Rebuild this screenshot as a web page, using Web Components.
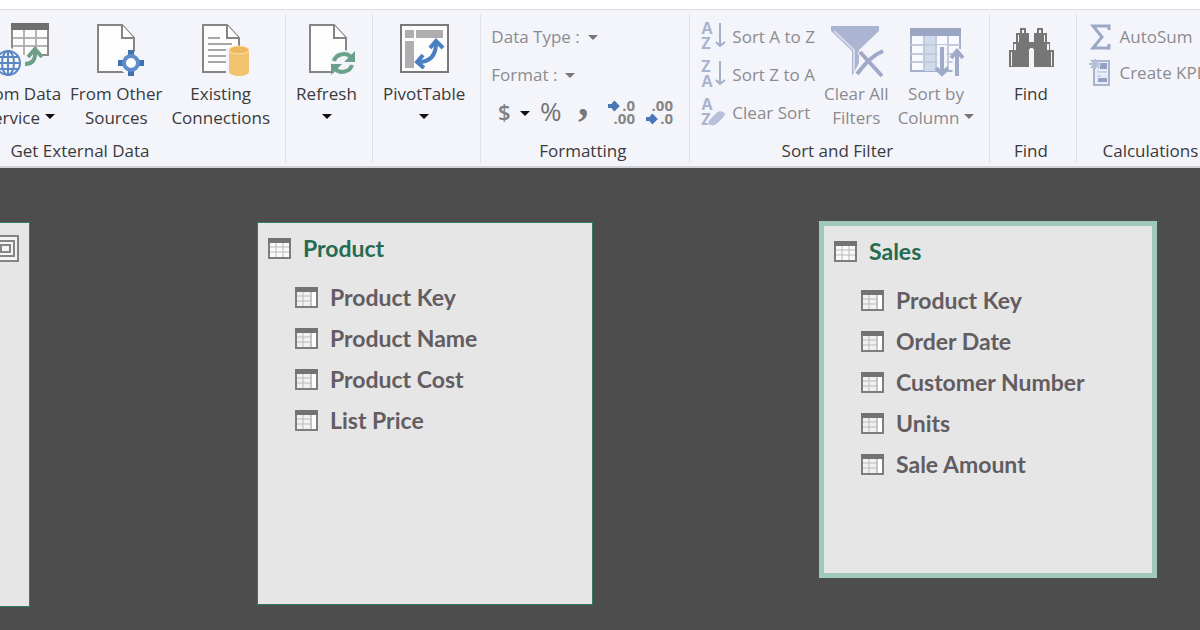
<!DOCTYPE html>
<html lang="en">
<head>
<meta charset="utf-8">
<meta name="viewport" content="width=device-width, initial-scale=1">
<title>Diagram View</title>
<style>
  html, body { height: 100%; }
  body {
    margin: 0;
    overflow: hidden;
    background: #4d4d4d;
    font-family: "Open Sans", "Noto Sans", sans-serif;
  }
</style>
</head>
<body>

<app-window>
  <ribbon-bar slot="ribbon">
    <ribbon-group label="Get External Data" class="first">
      <ribbon-button icon="dataservice" line1="From Data" line2="Service" menu></ribbon-button>
      <ribbon-button icon="othersources" line1="From Other" line2="Sources"></ribbon-button>
      <ribbon-button icon="connections" line1="Existing" line2="Connections"></ribbon-button>
    </ribbon-group>
    <ribbon-group>
      <ribbon-button icon="refresh" line1="Refresh" menu></ribbon-button>
    </ribbon-group>
    <ribbon-group>
      <ribbon-button icon="pivot" line1="PivotTable" menu></ribbon-button>
    </ribbon-group>
    <ribbon-group label="Formatting">
      <ribbon-stack>
        <ribbon-item text="Data Type :" menu disabled></ribbon-item>
        <ribbon-item text="Format :" menu disabled></ribbon-item>
        <format-buttons></format-buttons>
      </ribbon-stack>
    </ribbon-group>
    <ribbon-group label="Sort and Filter">
      <ribbon-stack>
        <ribbon-item icon="sortaz" text="Sort A to Z" disabled></ribbon-item>
        <ribbon-item icon="sortza" text="Sort Z to A" disabled></ribbon-item>
        <ribbon-item icon="clearsort" text="Clear Sort" disabled></ribbon-item>
      </ribbon-stack>
      <ribbon-button icon="clearfilters" line1="Clear All" line2="Filters" disabled></ribbon-button>
      <ribbon-button icon="sortcolumn" line1="Sort by" line2="Column" menu disabled></ribbon-button>
    </ribbon-group>
    <ribbon-group label="Find">
      <ribbon-button icon="find" line1="Find"></ribbon-button>
    </ribbon-group>
    <ribbon-group label="Calculations" class="last">
      <ribbon-stack class="tight">
        <ribbon-item icon="sum" text="AutoSum" disabled></ribbon-item>
        <ribbon-item icon="kpi" text="Create KPI" disabled></ribbon-item>
      </ribbon-stack>
    </ribbon-group>
  </ribbon-bar>

  <table-card style="left:-306px; top:54px; width:336px; height:385px" maximize></table-card>
  <table-card name="Product" style="left:257px; top:54px; width:336px; height:383px">
    <field-row>Product Key</field-row>
    <field-row>Product Name</field-row>
    <field-row>Product Cost</field-row>
    <field-row>List Price</field-row>
  </table-card>
  <table-card name="Sales" selected style="left:819px; top:53px; width:338px; height:357px">
    <field-row>Product Key</field-row>
    <field-row>Order Date</field-row>
    <field-row>Customer Number</field-row>
    <field-row>Units</field-row>
    <field-row>Sale Amount</field-row>
  </table-card>
</app-window>

<script>
const svg = (w, h, x, y, body) =>
  `<svg width="${w}" height="${h}" viewBox="${x} ${y} ${w} ${h}" aria-hidden="true">${body}</svg>`;

const page = (x) => `
  <path d="M${x} 25h24l12 13v34h-36z" fill="#fdfdfd" stroke="#858585" stroke-width="2"/>
  <path d="M${x + 24} 25v13h12" fill="#fdfdfd" stroke="#858585" stroke-width="2"/>`;

const azText = 'font-family="Open Sans" font-weight="700" font-size="16" text-anchor="middle" fill="#a9b3cd"';
const decText = 'font-family="Open Sans" font-weight="700" font-size="15" fill="#858585"';

const icons = {
  dataservice: svg(56, 54, -8, 23, `
    <rect x="13" y="24" width="36" height="31" fill="#fdfdfd"/>
    <path d="M13 38h36M13 46h36M25 30v25M37 30v25" stroke="#b4b4b4" stroke-width="2"/>
    <path d="M13 55V24h36v31h-8" fill="none" stroke="#8c8c8c" stroke-width="2"/>
    <path d="M12 23h38v7H12z" fill="#6f6f6f"/>
    <circle cx="9" cy="63" r="15" fill="#f4f5fa"/>
    <g fill="none" stroke="#5b87c5" stroke-width="2">
      <circle cx="9" cy="63" r="12"/><ellipse cx="9" cy="63" rx="6" ry="12"/>
      <path d="M9 51v24M-3 63h24M-1 57h20M-1 69h20"/>
    </g>
    <path d="M26 65c8 0 11-4 10-14" fill="none" stroke="#f4f5fa" stroke-width="8"/>
    <path d="M26 64c7 0 11-4 10-13" fill="none" stroke="#6f9f8b" stroke-width="4"/>
    <path d="M29 57l7-8 7 8" fill="none" stroke="#6f9f8b" stroke-width="4"/>`),
  othersources: svg(56, 54, 91, 23, page(101) + `
    <circle cx="134" cy="63" r="12" fill="#f4f5fa"/>
    <path d="M134 50v26M121 63h26" stroke="#3f70b0" stroke-width="6"/>
    <circle cx="134" cy="63" r="7" fill="#fdfdfd" stroke="#5e8dca" stroke-width="4"/>`),
  connections: svg(56, 54, 193, 23, page(203) + `
    <path d="M208 38h12M208 44h24M208 50h20M208 56h18M208 62h18" stroke="#a8a8a8" stroke-width="2"/>
    <path d="M226 48h25v29h-25z" fill="#f4f5fa"/>
    <path d="M229 50v22a10 4 0 0 0 20 0V50z" fill="#f2c26f"/>
    <ellipse cx="239" cy="50" rx="10" ry="4" fill="#efb85c" stroke="#fbe3b8" stroke-width="1"/>`),
  refresh: svg(56, 54, 299, 23, page(310) + `
    <circle cx="343" cy="63" r="13" fill="#f4f5fa"/>
    <g fill="none" stroke="#6aa18a" stroke-width="4">
      <path d="M334 61a10 9 0 0 1 17-4"/><path d="M352 65a10 9 0 0 1-17 4"/>
    </g>
    <path d="M355 51v11h-11zM331 75V64h11z" fill="#6aa18a"/>`),
  pivot: svg(56, 54, 395, 23, `
    <rect x="400" y="25" width="47" height="47" fill="#fdfdfd" stroke="#7a7a7a" stroke-width="2"/>
    <path d="M404 30h9v8h-9zM415 30h27v8h-27zM404 41h9v27h-9z" fill="#aeaeb0"/>
    <path d="M417 62c12 0 18-6 18-19" fill="none" stroke="#4a80c2" stroke-width="4"/>
    <path d="M429 48l6-7 7 7M422 55l-6 7 7 6" fill="none" stroke="#4a80c2" stroke-width="4"/>`),
  clearfilters: svg(56, 54, 831, 23, `
    <path d="M834 26h48v5l-20 19v13l-7 13V51l-21-20z" fill="#abb4d0"/>
    <path d="M837 31l20 19v22" fill="none" stroke="#d5daea" stroke-width="2"/>
    <path d="M863 51l22 25M886 51c-12 5-19 14-23 24" fill="none" stroke="#f4f5fa" stroke-width="7"/>
    <path d="M863 52l22 24M886 51c-12 5-18 13-26 23" fill="none" stroke="#a0aac8" stroke-width="4"/>`),
  sortcolumn: svg(56, 54, 909, 23, `
    <rect x="912" y="29" width="49" height="42" fill="#f8faff" stroke="#a6b0cb" stroke-width="2"/>
    <path d="M925 36h12v35h-12z" fill="#cfdaea"/>
    <path d="M912 45h49M912 54h49M912 62h49M925 36v35M937 36v35M949 36v35" stroke="#c2cbde" stroke-width="2"/>
    <path d="M911 28h51v8h-51z" fill="#9ba6c5"/>
    <path d="M943 45v31M958 49v27" stroke="#f4f5fa" stroke-width="9"/>
    <path d="M943 47v26M958 76V53" stroke="#a0abc7" stroke-width="4"/>
    <path d="M937 68l6 6 6-6M952 58l6-7 6 7" fill="none" stroke="#a0abc7" stroke-width="4"/>`),
  find: svg(56, 54, 1003, 23, `
    <path d="M1020 28h6v5h3v9h3v3h-2v22h-21V50h4v-8h3v-9h4z" fill="#767676"/>
    <path d="M1043 28h-6v5h-3v9h-3v3h2v22h21V50h-4v-8h-3v-9h-4z" fill="#767676"/>
    <path d="M1022 30h2v3h-2zM1018 35h1v7h-1zM1014 44h2v6h-2zM1011 52h1v14h-1zM1039 30h2v3h-2zM1044 35h1v7h-1zM1047 44h2v6h-2zM1051 52h1v14h-1z" fill="#f4f5fa"/>
    <path d="M1029 43h5v5h-5z" fill="#767676"/><path d="M1029 49h5v19h-5z" fill="#f4f5fa"/>`),
  sortaz: svg(26, 28, 702, 23, `
    <text x="709" y="34" ${azText}>A</text><text x="708" y="49" ${azText}>Z</text>
    <path d="M722 23v23M718 42l4 4 5-4" fill="none" stroke="#a3aecb" stroke-width="2"/>`),
  sortza: svg(26, 28, 702, 61, `
    <text x="708" y="72" ${azText}>Z</text><text x="709" y="87" ${azText}>A</text>
    <path d="M722 61v23M718 80l4 4 5-4" fill="none" stroke="#a3aecb" stroke-width="2"/>`),
  clearsort: svg(26, 28, 702, 98, `
    <text x="709" y="109" ${azText}>A</text><text x="708" y="124" ${azText}>Z</text>
    <path d="M712 118l8-8q3-1 6 1t0 5l-8 8q-4 2-7 0t1-6z" fill="#b7c1da" stroke="#f4f5fa"/>`),
  sum: svg(24, 26, 1090, 23, `
    <path d="M1110 29v-4h-16l9 11-9 11h16v-4" fill="none" stroke="#9ba7c6" stroke-width="3"/>`),
  kpi: svg(24, 28, 1090, 58, `
    <path d="M1095 60h15v24h-15z" fill="#e6ecf8" stroke="#a9b5d0" stroke-width="2"/>
    <path d="M1101 62h7v6h-7zM1099 77h9v4h-9z" fill="#93a0c2"/>
    <path d="M1098 71h10M1098 75h4" stroke="#b3bed6" stroke-width="1"/>
    <path d="M1096 58v10M1090 63h12M1092 59l8 8M1100 59l-8 8" stroke="#b5bfd8" stroke-width="2"/>`),
  table: svg(23, 21, 0, 0, `
    <rect x="1" y="1" width="21" height="19" fill="#fafafa" stroke="#7d7d7d" stroke-width="2"/>
    <path d="M2 9h19M2 14h19M8 5v14M15 5v14" stroke="#b9b9b9" stroke-width="1"/>
    <path d="M0 0h23v5H0z" fill="#737373"/>`),
  column: svg(23, 21, 0, 0, `
    <rect x="1" y="1" width="21" height="19" fill="#f1f1f1" stroke="#7d7d7d" stroke-width="2"/>
    <path d="M2 9h14M2 14h14M8 5v14" stroke="#b9b9b9" stroke-width="1"/>
    <path d="M16 5v14" stroke="#9a9a9a" stroke-width="1"/><path d="M17 5h4v14h-4z" fill="#fff"/>
    <path d="M0 0h23v5H0z" fill="#737373"/>`),
  maximize: svg(27, 27, 0, 0, `
    <g fill="#f4f4f4" stroke="#858585" stroke-width="2">
      <rect x="1" y="1" width="25" height="25"/><rect x="5" y="6" width="17" height="15"/>
      <rect x="9" y="10" width="9" height="7"/></g>`),
  dollar: svg(16, 28, 0, 0, '<text x="1" y="21" font-family="Open Sans" font-weight="600" font-size="22" fill="#808080">$</text>'),
  percent: svg(24, 28, 0, 0, '<text x="0" y="22" font-family="Open Sans" font-weight="400" font-size="26" fill="#747474">%</text>'),
  comma: svg(12, 28, 0, 0, '<text x="0" y="16" font-family="Liberation Serif" font-weight="700" font-size="42" fill="#777777">,</text>'),
  increase: svg(28, 28, 0, 0, `
    <path d="M0 7h8M5 3l4 4-4 4" fill="none" stroke="#4a77b4" stroke-width="4"/>
    <text x="27" y="12" text-anchor="end" ${decText}>.0</text><text x="27" y="25" text-anchor="end" ${decText}>.00</text>`),
  decrease: svg(28, 28, 0, 0, `
    <path d="M0 20h8M5 16l4 4-4 4" fill="none" stroke="#4a77b4" stroke-width="4"/>
    <text x="27" y="12" text-anchor="end" ${decText}>.00</text><text x="27" y="25" text-anchor="end" ${decText}>.0</text>`)
};

const buttonReset = `
  svg { display: block; flex: none; overflow: visible; }
  button {
    margin: 0; padding: 0; border: 0; background: none;
    font: inherit; line-height: 24px; color: inherit; white-space: nowrap;
  }
  .arrow {
    display: inline-block;
    border: 5px solid transparent;
    border-top-color: currentColor;
    border-bottom: 0;
    vertical-align: 5px;
  }`;

class AppWindow extends HTMLElement {
  connectedCallback() {
    this.attachShadow({ mode: "open" }).innerHTML = `
      <style>
        :host { display: flex; flex-direction: column; height: 100%; }
        header { padding-top: 9px; background: #fff; overflow: hidden; }
        main { flex: 1; position: relative; overflow: hidden; background: #4d4d4d; }
      </style>
      <header><slot name="ribbon"></slot></header>
      <main><slot></slot></main>`;
  }
}

class RibbonBar extends HTMLElement {
  connectedCallback() {
    // the bar is scrolled so that its first commands run off the left side
    this.attachShadow({ mode: "open" }).innerHTML = `
      <style>
        :host {
          display: flex;
          margin-left: -120px;
          padding: 4px 0 3px;
          border-top: 1px solid #dcdce0;
          border-bottom: 2px solid #d2d2d6;
          background: #f4f5fa;
          color: #3a3a3c;
          font-size: 17px;
          line-height: 24px;
        }
        ::slotted(.first) { min-width: 406px; }
        ::slotted(.last) { min-width: 150px; }
      </style>
      <slot></slot>`;
  }
}

class RibbonGroup extends HTMLElement {
  connectedCallback() {
    const label = this.getAttribute("label") || "";
    this.attachShadow({ mode: "open" }).innerHTML = `
      <style>
        :host {
          display: flex;
          flex: none;
          flex-direction: column;
          box-sizing: border-box;
          padding: 9px 15px 0 10px;
          border-right: 1px solid #e0e1e8;
        }
        :host(.last) { padding-left: 12px; }
        .body { display: flex; flex: 1; justify-content: flex-end; gap: 9px; min-height: 107px; }
        :host(.last) .body { justify-content: flex-start; }
        .label { height: 24px; margin-top: 9px; text-align: center; }
      </style>
      <div class="body"><slot></slot></div>
      <div class="label">${label}</div>`;
  }
}

class RibbonStack extends HTMLElement {
  connectedCallback() {
    this.attachShadow({ mode: "open" }).innerHTML = `
      <style>
        :host { display: flex; flex-direction: column; gap: 14px; padding-top: 2px; }
        :host(.tight) { gap: 12px; }
      </style>
      <slot></slot>`;
  }
}

class RibbonButton extends HTMLElement {
  connectedCallback() {
    const line2 = this.getAttribute("line2") || "";
    const arrow = this.hasAttribute("menu") ? '<i class="arrow"></i>' : "";
    this.attachShadow({ mode: "open" }).innerHTML = `
      <style>
        ${buttonReset}
        :host { display: block; min-width: 61px; }
        :host([disabled]) { color: #8b8b8f; }
        button { display: flex; flex-direction: column; align-items: center; width: 100%; }
        .icon { height: 59px; }
        .line { display: block; height: 24px; }
        .arrow { color: #111; }
        .word + .arrow { margin-left: 5px; }
        :host([disabled]) .arrow { color: #77777b; }
      </style>
      <button type="button" ${this.hasAttribute("disabled") ? "disabled" : ""}>
        <span class="icon">${icons[this.getAttribute("icon")]}</span>
        <span class="line">${this.getAttribute("line1")}</span>
        <span class="line">${line2 ? `<span class="word">${line2}</span>` : ""}${arrow}</span>
      </button>`;
  }
}

class RibbonItem extends HTMLElement {
  connectedCallback() {
    const icon = this.getAttribute("icon");
    this.attachShadow({ mode: "open" }).innerHTML = `
      <style>
        ${buttonReset}
        :host { display: block; color: #8b8b8f; }
        button { display: flex; align-items: center; gap: 6px; height: 24px; }
        .arrow { margin-left: 2px; color: #77777b; }
      </style>
      <button type="button" ${this.hasAttribute("disabled") ? "disabled" : ""}>
        ${icon ? icons[icon] : ""}
        <span>${this.getAttribute("text")}</span>
        ${this.hasAttribute("menu") ? '<i class="arrow"></i>' : ""}
      </button>`;
  }
}

class FormatButtons extends HTMLElement {
  connectedCallback() {
    this.attachShadow({ mode: "open" }).innerHTML = `
      <style>
        ${buttonReset}
        :host { display: flex; align-items: center; gap: 10px; height: 24px; padding-left: 6px; }
        button { display: flex; align-items: center; gap: 7px; }
        .arrow { color: #111; }
        .wide { margin: 0 8px 0 4px; }
      </style>
      <button type="button" aria-label="Currency">${icons.dollar}<i class="arrow"></i></button>
      <button type="button" aria-label="Percent">${icons.percent}</button>
      <button type="button" aria-label="Thousands separator" class="wide">${icons.comma}</button>
      <button type="button" aria-label="Increase decimal">${icons.increase}</button>
      <button type="button" aria-label="Decrease decimal">${icons.decrease}</button>`;
  }
}

class TableCard extends HTMLElement {
  connectedCallback() {
    const name = this.getAttribute("name");
    this.attachShadow({ mode: "open" }).innerHTML = `
      <style>
        ${buttonReset}
        :host {
          position: absolute;
          box-sizing: border-box;
          padding: 5px 10px 0;
          border: 1px solid #2f7d66;
          background: #e6e6e6;
          font: 700 23px/41px Lato, "Open Sans", sans-serif;
          color: #635c61;
        }
        :host([selected]) { border: 5px solid #9fcab8; }
        header { display: flex; align-items: center; gap: 12px; height: 41px; }
        h2 { margin: 0; font: inherit; color: #256b50; }
        header button { margin-left: auto; }
        .fields { padding: 8px 0 0 27px; }
      </style>
      <header>
        ${name ? `${icons.table}<h2>${name}</h2>` : ""}
        ${this.hasAttribute("maximize") ? `<button type="button" aria-label="Maximize">${icons.maximize}</button>` : ""}
      </header>
      <div class="fields"><slot></slot></div>`;
  }
}

class FieldRow extends HTMLElement {
  connectedCallback() {
    this.attachShadow({ mode: "open" }).innerHTML = `
      <style>
        :host { display: flex; align-items: center; gap: 12px; height: 41px; white-space: nowrap; }
        svg { display: block; flex: none; }
      </style>
      ${icons.column}<span><slot></slot></span>`;
  }
}

customElements.define("app-window", AppWindow);
customElements.define("ribbon-bar", RibbonBar);
customElements.define("ribbon-group", RibbonGroup);
customElements.define("ribbon-stack", RibbonStack);
customElements.define("ribbon-button", RibbonButton);
customElements.define("ribbon-item", RibbonItem);
customElements.define("format-buttons", FormatButtons);
customElements.define("table-card", TableCard);
customElements.define("field-row", FieldRow);
</script>
</body>
</html>
